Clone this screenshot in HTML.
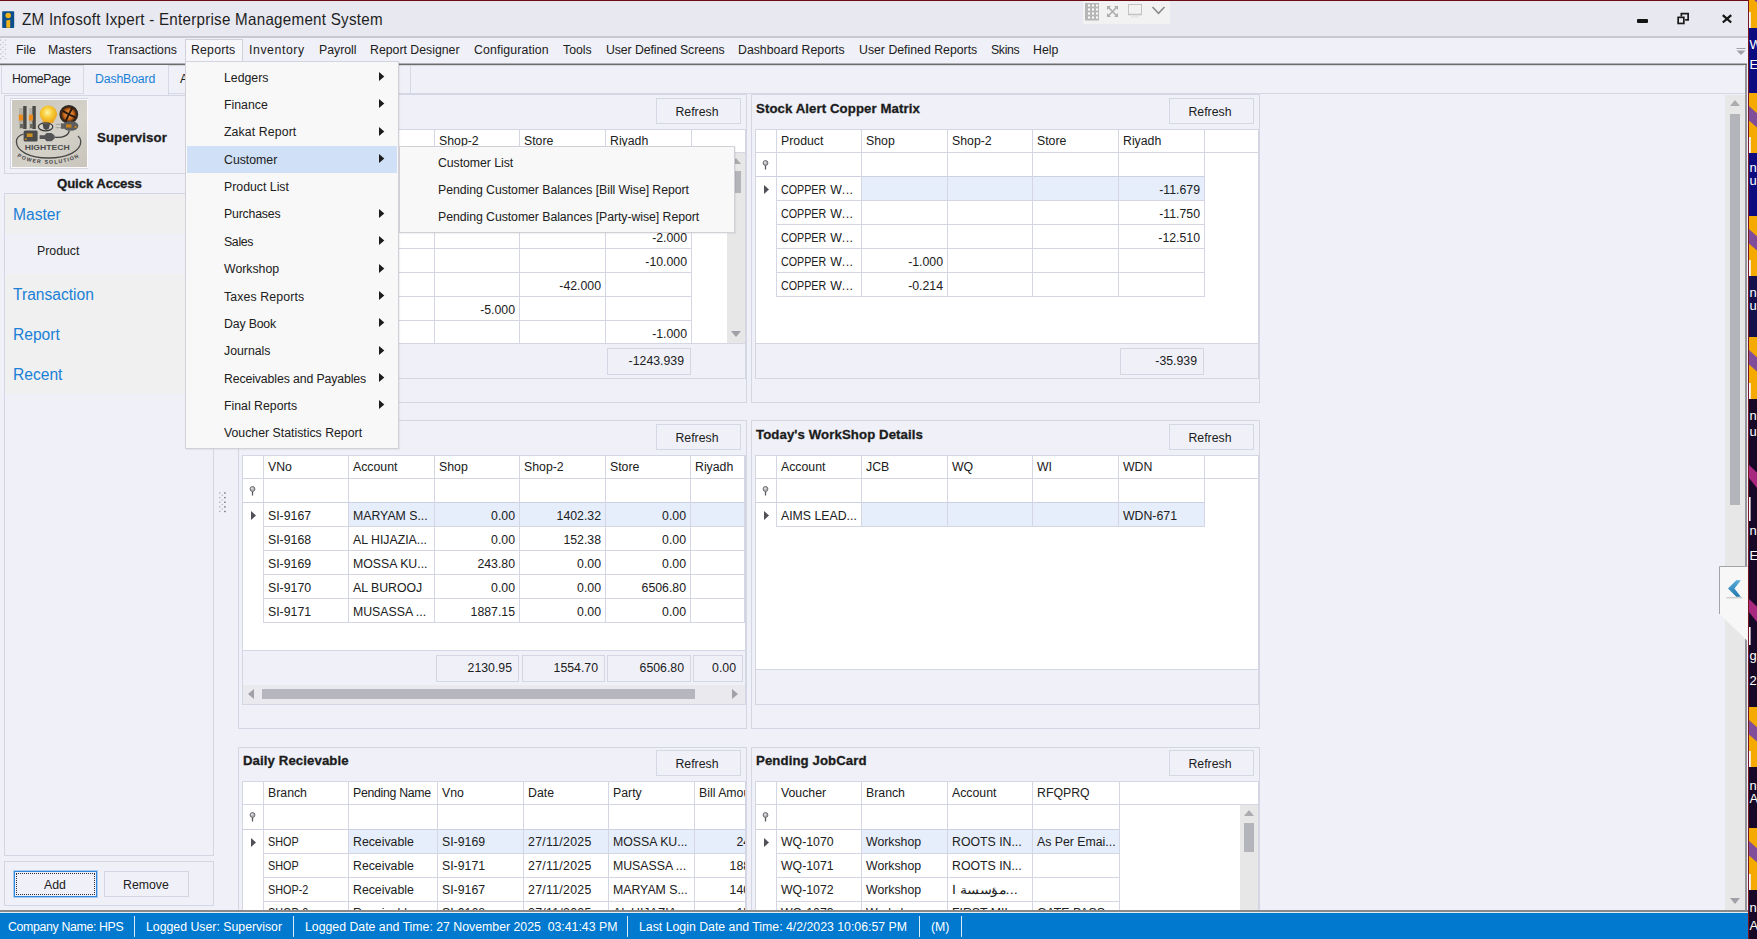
<!DOCTYPE html>
<html><head><meta charset="utf-8"><title>ZM Infosoft Ixpert - Enterprise Management System</title>
<style>
html,body{margin:0;padding:0;}
body{width:1757px;height:939px;overflow:hidden;position:relative;background:#eff0f8;font-family:"Liberation Sans",sans-serif;font-size:12.3px;color:#202020;}
div{position:absolute;box-sizing:border-box;}
svg{position:absolute;overflow:visible;}
.t{white-space:nowrap;line-height:16px;height:16px;}
.b{font-weight:bold;font-size:13.2px;letter-spacing:0.1px;color:#1c1c1c;-webkit-text-stroke:0.3px #1c1c1c;}
.h{font-size:15.6px;color:#1a80d6;line-height:20px;height:20px;white-space:nowrap;}
.c{border-right:1px solid #d4d6e4;border-bottom:1px solid #d4d6e4;background:#fff;white-space:nowrap;overflow:hidden;line-height:24.4px;padding:0 4px 0 4px;}
.u{display:inline-block;transform:scaleX(.88);transform-origin:0 50%;}
.r{text-align:right;}
.s{background:#e6eefc;}
.btn{border:1px solid #d4d7e4;background:#f0f1f8;text-align:center;line-height:26.4px;padding-right:3px;}
.m{white-space:nowrap;line-height:16px;height:16px;color:#202020;}
</style></head><body>

<svg style="left:1749px;top:0px;overflow:hidden" width="8" height="939" viewBox="0 0 8 939"><rect width="8" height="939" fill="#180828"/><rect x="0" y="28" width="8" height="65" fill="#0c0c80"/><rect x="0" y="153" width="8" height="63" fill="#0c0c80"/><rect x="0" y="276" width="8" height="61" fill="#14104c"/><rect x="0" y="-32" width="8" height="60" fill="#f4aa00"/><path d="M0 -19l8 7.200v14.400l-8 -7.200z" fill="#7f4d9a"/><rect x="0" y="12" width="1.800" height="16" fill="#f4f4fa"/><rect x="0" y="93" width="8" height="60" fill="#f4aa00"/><path d="M0 106l8 7.200v14.400l-8 -7.200z" fill="#7f4d9a"/><rect x="0" y="137" width="1.800" height="16" fill="#f4f4fa"/><rect x="0" y="216" width="8" height="60" fill="#f4aa00"/><path d="M0 229l8 7.200v14.400l-8 -7.200z" fill="#7f4d9a"/><rect x="0" y="260" width="1.800" height="16" fill="#f4f4fa"/><rect x="0" y="337" width="8" height="62" fill="#f4aa00"/><path d="M0 350l8 7.200v14.400l-8 -7.200z" fill="#7f4d9a"/><rect x="0" y="383" width="1.800" height="16" fill="#f4f4fa"/><rect x="0" y="707" width="8" height="60" fill="#f4aa00"/><path d="M0 720l8 7.200v14.400l-8 -7.200z" fill="#7f4d9a"/><rect x="0" y="751" width="1.800" height="16" fill="#f4f4fa"/><rect x="0" y="828" width="8" height="62" fill="#f4aa00"/><path d="M0 841l8 7.200v14.400l-8 -7.200z" fill="#7f4d9a"/><rect x="0" y="874" width="1.800" height="16" fill="#f4f4fa"/><path d="M0 465l8 7.500v15.500l-8 -10z" fill="#a82880"/><rect x="0" y="497" width="1.600" height="24" fill="#f4f4fa"/><path d="M0 599l8 7.500v15.500l-8 -10z" fill="#a82880"/><rect x="0" y="627" width="1.600" height="18" fill="#f4f4fa"/><g font-family="Liberation Sans, sans-serif" font-size="13" fill="#ffffff"><text x="0.500" y="49">W</text><text x="0.500" y="69">E</text><text x="0.500" y="172">ng</text><text x="0.500" y="185">u</text><text x="0.500" y="297">ng</text><text x="0.500" y="310">u</text><text x="0.500" y="420">ng</text><text x="0.500" y="436">u</text><text x="0.500" y="535">ng</text><text x="0.500" y="560">E .</text><text x="0.500" y="660">g:</text><text x="0.500" y="685">2</text><text x="0.500" y="790">ng</text><text x="0.500" y="803">A</text><text x="0.500" y="912">ng</text><text x="0.500" y="930">A</text></g></svg>
<div style="left:0px;top:0px;width:1748px;height:37px;background:#e8e8f0;"></div>
<div style="left:0px;top:0px;width:1749px;height:1px;background:#6c0c14;"></div>
<div style="left:1748px;top:0px;width:1px;height:939px;background:#7a1622;"></div>
<div class="t" style="left:22px;top:10.5px;font-size:15.2px;letter-spacing:0.25px;line-height:18px;height:18px;color:#1e1e1e;transform:scaleY(1.1);transform-origin:0 14.5px;">ZM Infosoft Ixpert - Enterprise Management System</div>
<svg style="left:2px;top:10.500px" width="13" height="18" viewBox="0 0 13 18"><rect x="0.200" y="0.300" width="12" height="16.800" rx="0.800" fill="#0a4f8c"/><circle cx="6.200" cy="4.400" r="2.750" fill="#f4b418"/><path d="M4.300 9.600l3.900 -0.800v7.900h-3.900z" fill="#f4b418"/></svg>
<div style="left:1083px;top:1px;width:87px;height:23px;background:#f2f2f2;"></div>
<svg style="left:1085px;top:2.500px" width="14" height="18" viewBox="0 0 14 18"><rect x="0" y="0" width="14" height="17.500" fill="#b6b6b6"/><rect x="3" y="1.5" width="2" height="2" fill="#fff"/><rect x="3" y="5.5" width="2" height="2" fill="#fff"/><rect x="3" y="9.5" width="2" height="2" fill="#fff"/><rect x="3" y="13.5" width="2" height="2" fill="#fff"/><rect x="7" y="1.5" width="2" height="2" fill="#fff"/><rect x="7" y="5.5" width="2" height="2" fill="#fff"/><rect x="7" y="9.5" width="2" height="2" fill="#fff"/><rect x="7" y="13.5" width="2" height="2" fill="#fff"/><rect x="11" y="1.5" width="2" height="2" fill="#fff"/><rect x="11" y="5.5" width="2" height="2" fill="#fff"/><rect x="11" y="9.5" width="2" height="2" fill="#fff"/><rect x="11" y="13.5" width="2" height="2" fill="#fff"/></svg>
<svg style="left:1107px;top:6px" width="11" height="11" viewBox="0 0 11 11" fill="#adadad" stroke="#adadad"><path d="M1.500 1.500l8 8M9.500 1.500l-8 8" stroke-width="1.600" fill="none"/><path d="M0 0h4l-4 4zM11 0h-4l4 4zM0 11h4l-4 -4zM11 11h-4l4 -4z" stroke="none"/></svg>
<svg style="left:1128px;top:4px" width="14" height="14" viewBox="0 0 14 14" fill="none" stroke="#c4c4c4"><rect x="0.500" y="0.500" width="13" height="10" stroke-width="1"/><path d="M0 10.500h14" stroke-width="1.600"/><path d="M3.500 13h7" stroke="#d0d0d0" stroke-width="1.200" stroke-dasharray="1.500 1"/></svg>
<svg style="left:1152px;top:6px" width="13" height="9" viewBox="0 0 13 9" fill="none" stroke="#888888" stroke-width="1.500"><path d="M0.500 1l6 6.300l6 -6.300"/></svg>
<div style="left:1637px;top:19px;width:11px;height:4px;background:#141414;border-radius:1px;"></div>
<svg style="left:1676px;top:11.500px" width="14" height="14" viewBox="0 0 14 14" fill="none" stroke="#1a1a1a" stroke-width="1.700"><path d="M5.350 4.500V1.650h6.800v6.300h-3"/><rect x="2.150" y="5.350" width="5.700" height="6.100"/></svg>
<svg style="left:1721px;top:13px" width="12" height="12" viewBox="0 0 12 12" fill="none" stroke="#161616" stroke-width="2.300"><path d="M1.800 2.200l8.400 7.300M10.200 2.200l-8.400 7.300"/></svg>
<div style="left:0px;top:36px;width:1748px;height:28px;background:#f0f0f8;border-top:2px solid #c8c8d4;"></div>
<div style="left:0px;top:63px;width:1747px;height:3px;background:linear-gradient(#b0b0b4 0,#b0b0b4 33%,#6c6c6c 33%,#6c6c6c 67%,#d4d4da 67%);"></div>
<div style="left:1744px;top:65px;width:3px;height:846px;background:#94949a;border-left:1px solid #f8f8fc;"></div>
<svg style="left:0px;top:36px" width="7" height="26"><g fill="#c6c6ca"><rect x="0" y="3.50" width="1.500" height="1.300"/><rect x="4.900" y="3.50" width="1.300" height="1.300"/><rect x="0" y="8.12" width="1.500" height="1.300"/><rect x="4.900" y="8.12" width="1.300" height="1.300"/><rect x="0" y="12.74" width="1.500" height="1.300"/><rect x="4.900" y="12.74" width="1.300" height="1.300"/><rect x="0" y="17.36" width="1.500" height="1.300"/><rect x="4.900" y="17.36" width="1.300" height="1.300"/><rect x="0" y="21.98" width="1.500" height="1.300"/><rect x="4.900" y="21.98" width="1.300" height="1.300"/><rect x="2.300" y="6.10" width="1.600" height="1.100"/><rect x="2.300" y="10.72" width="1.600" height="1.100"/><rect x="2.300" y="15.34" width="1.600" height="1.100"/><rect x="2.300" y="19.96" width="1.600" height="1.100"/></g></svg>
<div style="left:185px;top:39px;width:58px;height:23px;background:#f6f6fb;border:1px solid #d0d0d8;border-bottom:none;"></div>
<div class="t" style="left:16px;top:42.2px;">File</div>
<div class="t" style="left:48px;top:42.2px;">Masters</div>
<div class="t" style="left:107px;top:42.2px;">Transactions</div>
<div class="t" style="left:191px;top:42.2px;letter-spacing:0.19px;">Reports</div>
<div class="t" style="left:249px;top:42.2px;letter-spacing:0.57px;">Inventory</div>
<div class="t" style="left:319px;top:42.2px;">Payroll</div>
<div class="t" style="left:370px;top:42.2px;">Report Designer</div>
<div class="t" style="left:474px;top:42.2px;letter-spacing:0.12px;">Configuration</div>
<div class="t" style="left:563px;top:42.2px;">Tools</div>
<div class="t" style="left:606px;top:42.2px;letter-spacing:-0.09px;">User Defined Screens</div>
<div class="t" style="left:738px;top:42.2px;">Dashboard Reports</div>
<div class="t" style="left:859px;top:42.2px;">User Defined Reports</div>
<div class="t" style="left:991px;top:42.2px;letter-spacing:-0.34px;">Skins</div>
<div class="t" style="left:1033px;top:42.2px;">Help</div>
<svg style="left:1736px;top:46.500px" width="10" height="9" viewBox="0 0 10 9"><path d="M0.500 1.500h9" stroke="#a0a0a8"/><path d="M0.500 3.500h9l-4.500 4.500z" fill="#a0a0a8"/></svg>
<div style="left:2px;top:66px;width:1743px;height:28px;background:#eff0f8;"></div>
<div style="left:2px;top:93px;width:1743px;height:1px;background:#d6d8e6;"></div>
<div style="left:1px;top:65px;width:83px;height:29px;border-right:1px solid #d6d8e6;border-left:1px solid #d6d8e6;"></div>
<div style="left:84px;top:65px;width:85px;height:30px;border-right:1px solid #d6d8e6;background:#eff0f8;"></div>
<div style="left:169px;top:65px;width:242px;height:29px;border-right:1px solid #d6d8e6;"></div>
<div class="t" style="left:12px;top:70.8px;letter-spacing:-0.4px;">HomePage</div>
<div class="t" style="left:95px;top:70.8px;color:#1a80d6;letter-spacing:-0.15px;">DashBoard</div>
<div class="t" style="left:180px;top:70.8px;">A</div>
<div style="left:4px;top:95px;width:210px;height:79px;border:1px solid #d4d6e4;"></div>
<div style="left:10px;top:98px;width:78px;height:71px;border:1px solid #d4d6e4;background:#f4f4fa;"></div>
<div style="left:11px;top:99px;width:77px;height:69px;border:1px solid #fafaff;"></div>
<svg style="left:12px;top:100px" width="75" height="67" viewBox="0 0 75 67">
<defs><linearGradient id="lg" x1="0" y1="0" x2="1" y2="1"><stop offset="0" stop-color="#c9c6bc"/><stop offset="0.6" stop-color="#d4d1c9"/><stop offset="1" stop-color="#c8c4bc"/></linearGradient>
<radialGradient id="bulb" cx="0.45" cy="0.4" r="0.65"><stop offset="0" stop-color="#fff6a8"/><stop offset="0.45" stop-color="#f8cc38"/><stop offset="1" stop-color="#e89c18"/></radialGradient>
<radialGradient id="fan" cx="0.5" cy="0.5" r="0.5"><stop offset="0" stop-color="#f0b060"/><stop offset="0.55" stop-color="#c86414"/><stop offset="0.8" stop-color="#3a2414"/><stop offset="1" stop-color="#2a2a2a"/></radialGradient></defs>
<rect width="75" height="67" fill="url(#lg)"/>
<rect x="7" y="8" width="5" height="21" fill="#b4b2a8"/><rect x="11.200" y="6" width="3.400" height="23" fill="#4a4a46"/><rect x="6.800" y="14.600" width="4.200" height="6" fill="#ec8a1c"/><rect x="8" y="24" width="3" height="4" fill="#6a6a62"/>
<rect x="17" y="8" width="5" height="21" fill="#b4b2a8"/><rect x="20.400" y="6" width="3.400" height="23" fill="#4a4a46"/><rect x="16.800" y="14.600" width="4.200" height="6" fill="#ec8a1c"/><rect x="18" y="24" width="3" height="4" fill="#6a6a62"/>
<path d="M36.400 5.500c5 0 8.600 3.800 8.600 8.400c0 3.600 -2.600 5.400 -3.800 9h-9.600c-1.200 -3.600 -3.800 -5.400 -3.800 -9c0 -4.600 3.600 -8.400 8.600 -8.400z" fill="url(#bulb)"/>
<ellipse cx="33.600" cy="26.800" rx="7.200" ry="4" fill="#d8d6d0" stroke="#3c3c3c" stroke-width="1.300"/><path d="M30.500 23.500h7.500l-1 5l-2.800 1.800l-2.700 -1.800z" fill="#4c4c4c"/>
<circle cx="56.800" cy="14.400" r="9.400" fill="url(#fan)"/><path d="M56.800 14.400l-6 -3.500M56.800 14.400l3.500 -6.500M56.800 14.400l6.500 3M56.800 14.400l-3 6.500" stroke="#2a1a10" stroke-width="2"/>
<ellipse cx="58.600" cy="26" rx="7.800" ry="4.800" fill="#5a5c5e"/><rect x="54" y="24.400" width="5.500" height="3.200" fill="#c8801c"/><rect x="62.500" y="26" width="2" height="2" fill="#c8801c"/>
<path d="M43.600 24.400h8M43.600 27.600h8" stroke="#a8a8a4" stroke-width="1.300"/><rect x="49" y="23.400" width="3" height="5.400" fill="#606060"/>
<rect x="11.600" y="30.400" width="14" height="11.200" rx="1.500" fill="#4a4a4a"/><rect x="14.800" y="33.400" width="5.800" height="3.600" fill="#c8901c"/><rect x="12.800" y="38.500" width="2" height="1.500" fill="#c8801c"/>
<path d="M27.600 35.200h5l2 -2.200h5l3 2.600v3l-3 2.600h-5l-2 -2.200h-5z" fill="#525456"/>
<path d="M42.600 37.200c8 1 14 -1.500 14.600 -6.500" fill="none" stroke="#404040" stroke-width="1.300"/>
<path d="M11.600 34c-5 1.500 -7.200 4 -7.200 7.500c0 9.500 13 16.500 32 16.500s32.400 -7 32.400 -16.500c0 -2 -1 -4 -2.800 -5.500" fill="none" stroke="#484848" stroke-width="1.300"/>
<text x="12.800" y="49.600" textLength="44.800" lengthAdjust="spacingAndGlyphs" font-family="Liberation Sans, sans-serif" font-weight="bold" font-size="6.800" fill="#4c4c4c">HIGHTECH</text>
<path id="arc" d="M4.500 56c8 5.500 20 7.800 32 7.800s24 -2.300 32 -7.800" fill="none"/>
<text font-family="Liberation Sans, sans-serif" font-weight="bold" font-size="5.300" fill="#404040" letter-spacing="1.150"><textPath href="#arc" startOffset="50%" text-anchor="middle">POWER SOLUTION</textPath></text>
</svg>
<div class="t b" style="left:97px;top:129.6px;">Supervisor</div>
<div class="t b" style="left:57px;top:175.8px;letter-spacing:-0.1px;">Quick Access</div>
<div style="left:4px;top:193px;width:210px;height:663px;border:1px solid #d4d6e4;"></div>
<div style="left:5px;top:194px;width:208px;height:40px;background:#f0f0f0;"></div>
<div style="left:5px;top:274px;width:208px;height:120px;background:#f0f0f0;"></div>
<div class="h" style="left:13px;top:204.8px;">Master</div>
<div class="t" style="left:37px;top:243px;">Product</div>
<div class="h" style="left:13px;top:284.6px;">Transaction</div>
<div class="h" style="left:13px;top:324.6px;">Report</div>
<div class="h" style="left:13px;top:364.6px;">Recent</div>
<div style="left:4px;top:861px;width:210px;height:45px;border:1px solid #d4d6e4;"></div>
<div style="left:14px;top:871px;width:83px;height:26px;border:1px solid #2f86da;background:#f0f1f8;box-shadow:0 0 0 1px rgba(47,134,218,.35);"></div>
<div style="left:16px;top:873px;width:79px;height:22px;border:1px dotted #303030;"></div>
<div style="left:104px;top:871px;width:85px;height:26px;border:1px solid #d4d6e4;background:#f0f1f8;"></div>
<div class="t" style="left:44px;top:876.6px;">Add</div>
<div class="t" style="left:123px;top:876.6px;">Remove</div>
<svg style="left:218.700px;top:492px" width="7" height="21"><rect x="0" y="0.30" width="1.500" height="1.300" fill="#b4b4b6"/><rect x="5.200" y="0.30" width="1.400" height="1.400" fill="#6c6c6e"/><rect x="0" y="4.92" width="1.500" height="1.300" fill="#b4b4b6"/><rect x="5.200" y="4.92" width="1.400" height="1.400" fill="#6c6c6e"/><rect x="0" y="9.54" width="1.500" height="1.300" fill="#b4b4b6"/><rect x="5.200" y="9.54" width="1.400" height="1.400" fill="#6c6c6e"/><rect x="0" y="14.16" width="1.500" height="1.300" fill="#b4b4b6"/><rect x="5.200" y="14.16" width="1.400" height="1.400" fill="#6c6c6e"/><rect x="0" y="18.78" width="1.500" height="1.300" fill="#b4b4b6"/><rect x="5.200" y="18.78" width="1.400" height="1.400" fill="#6c6c6e"/><rect x="2.500" y="2.70" width="1.600" height="1.100" fill="#c0c0c2"/><rect x="2.500" y="7.32" width="1.600" height="1.100" fill="#c0c0c2"/><rect x="2.500" y="11.94" width="1.600" height="1.100" fill="#c0c0c2"/><rect x="2.500" y="16.56" width="1.600" height="1.100" fill="#c0c0c2"/></svg>
<div style="left:238px;top:94px;width:509px;height:309px;border:1px solid #d4d6e4;"></div>
<div class="t b" style="left:243px;top:100.8px;">Stock Alert</div>
<div class="btn" style="left:656px;top:98px;width:85px;height:26px;">Refresh</div>
<div style="left:242px;top:129px;width:504px;height:250px;background:#fff;border:1px solid #d4d6e4;overflow:hidden;">
<div class="c" style="left:0px;top:0px;width:21px;height:23px;line-height:23.4px;"></div>
<div class="c" style="left:21px;top:0px;width:85px;height:23px;line-height:23.4px;">Product</div>
<div class="c" style="left:106px;top:0px;width:86px;height:23px;line-height:23.4px;">Shop</div>
<div class="c" style="left:192px;top:0px;width:85px;height:23px;line-height:23.4px;">Shop-2</div>
<div class="c" style="left:277px;top:0px;width:86px;height:23px;line-height:23.4px;">Store</div>
<div class="c" style="left:363px;top:0px;width:86px;height:23px;line-height:23.4px;">Riyadh</div>
<div style="left:449px;top:0px;width:54px;height:23px;border-bottom:1px solid #d4d6e4;"></div>
<div class="c" style="left:0px;top:23px;width:21px;height:25px;border-bottom:2px solid #ccd0e0;"></div>
<div class="c" style="left:21px;top:23px;width:85px;height:25px;border-bottom:2px solid #ccd0e0;"></div>
<div class="c" style="left:106px;top:23px;width:86px;height:25px;border-bottom:2px solid #ccd0e0;"></div>
<div class="c" style="left:192px;top:23px;width:85px;height:25px;border-bottom:2px solid #ccd0e0;"></div>
<div class="c" style="left:277px;top:23px;width:86px;height:25px;border-bottom:2px solid #ccd0e0;"></div>
<div class="c" style="left:363px;top:23px;width:86px;height:25px;border-bottom:2px solid #ccd0e0;"></div>
<div class="c" style="left:0px;top:47px;width:21px;height:24px;border-bottom:none;line-height:27.2px;"></div>
<div class="c" style="left:21px;top:47px;width:85px;height:24px;line-height:27.2px;"></div>
<div class="c r s" style="left:106px;top:47px;width:86px;height:24px;line-height:27.2px;"></div>
<div class="c r s" style="left:192px;top:47px;width:85px;height:24px;line-height:27.2px;"></div>
<div class="c r s" style="left:277px;top:47px;width:86px;height:24px;line-height:27.2px;"></div>
<div class="c r s" style="left:363px;top:47px;width:86px;height:24px;line-height:27.2px;">-11.000</div>
<div class="c" style="left:0px;top:71px;width:21px;height:24px;border-bottom:none;line-height:27.2px;"></div>
<div class="c" style="left:21px;top:71px;width:85px;height:24px;line-height:27.2px;"></div>
<div class="c r" style="left:106px;top:71px;width:86px;height:24px;line-height:27.2px;"></div>
<div class="c r" style="left:192px;top:71px;width:85px;height:24px;line-height:27.2px;"></div>
<div class="c r" style="left:277px;top:71px;width:86px;height:24px;line-height:27.2px;"></div>
<div class="c r" style="left:363px;top:71px;width:86px;height:24px;line-height:27.2px;">-3.000</div>
<div class="c" style="left:0px;top:95px;width:21px;height:24px;border-bottom:none;line-height:27.2px;"></div>
<div class="c" style="left:21px;top:95px;width:85px;height:24px;line-height:27.2px;"></div>
<div class="c r" style="left:106px;top:95px;width:86px;height:24px;line-height:27.2px;"></div>
<div class="c r" style="left:192px;top:95px;width:85px;height:24px;line-height:27.2px;"></div>
<div class="c r" style="left:277px;top:95px;width:86px;height:24px;line-height:27.2px;"></div>
<div class="c r" style="left:363px;top:95px;width:86px;height:24px;line-height:27.2px;">-2.000</div>
<div class="c" style="left:0px;top:119px;width:21px;height:24px;border-bottom:none;line-height:27.2px;"></div>
<div class="c" style="left:21px;top:119px;width:85px;height:24px;line-height:27.2px;"></div>
<div class="c r" style="left:106px;top:119px;width:86px;height:24px;line-height:27.2px;"></div>
<div class="c r" style="left:192px;top:119px;width:85px;height:24px;line-height:27.2px;"></div>
<div class="c r" style="left:277px;top:119px;width:86px;height:24px;line-height:27.2px;"></div>
<div class="c r" style="left:363px;top:119px;width:86px;height:24px;line-height:27.2px;">-10.000</div>
<div class="c" style="left:0px;top:143px;width:21px;height:24px;border-bottom:none;line-height:27.2px;"></div>
<div class="c" style="left:21px;top:143px;width:85px;height:24px;line-height:27.2px;"></div>
<div class="c r" style="left:106px;top:143px;width:86px;height:24px;line-height:27.2px;"></div>
<div class="c r" style="left:192px;top:143px;width:85px;height:24px;line-height:27.2px;"></div>
<div class="c r" style="left:277px;top:143px;width:86px;height:24px;line-height:27.2px;">-42.000</div>
<div class="c r" style="left:363px;top:143px;width:86px;height:24px;line-height:27.2px;"></div>
<div class="c" style="left:0px;top:167px;width:21px;height:24px;border-bottom:none;line-height:27.2px;"></div>
<div class="c" style="left:21px;top:167px;width:85px;height:24px;line-height:27.2px;"></div>
<div class="c r" style="left:106px;top:167px;width:86px;height:24px;line-height:27.2px;"></div>
<div class="c r" style="left:192px;top:167px;width:85px;height:24px;line-height:27.2px;">-5.000</div>
<div class="c r" style="left:277px;top:167px;width:86px;height:24px;line-height:27.2px;"></div>
<div class="c r" style="left:363px;top:167px;width:86px;height:24px;line-height:27.2px;"></div>
<div class="c" style="left:0px;top:191px;width:21px;height:24px;border-bottom:none;line-height:27.2px;"></div>
<div class="c" style="left:21px;top:191px;width:85px;height:24px;line-height:27.2px;"></div>
<div class="c r" style="left:106px;top:191px;width:86px;height:24px;line-height:27.2px;"></div>
<div class="c r" style="left:192px;top:191px;width:85px;height:24px;line-height:27.2px;"></div>
<div class="c r" style="left:277px;top:191px;width:86px;height:24px;line-height:27.2px;"></div>
<div class="c r" style="left:363px;top:191px;width:86px;height:24px;line-height:27.2px;">-1.000</div>
</div>
<svg style="left:249px;top:160px" width="7" height="10" viewBox="0 0 7 10"><circle cx="3.500" cy="3" r="2.400" fill="#b8b8bc" stroke="#68686c" stroke-width="1"/><circle cx="3" cy="2.400" r="0.900" fill="#e8e8ec"/><path d="M3.500 5.500v4" stroke="#58585c" stroke-width="1.300"/></svg>
<svg style="left:251px;top:185px" width="5" height="9" viewBox="0 0 5 9"><path d="M0 0l5 4.500l-5 4.500z" fill="#505058"/></svg>
<div style="left:242px;top:343px;width:504px;height:36px;background:#eff0f8;border:1px solid #d4d6e4;"></div>
<div style="left:607px;top:348px;width:84px;height:27px;border:1px solid #d4d6e4;background:#f0f1f8;text-align:right;padding-right:6px;line-height:25.6px;">-1243.939</div>
<div style="left:727px;top:153px;width:18px;height:190px;background:#e7e7e8;"></div>
<div style="left:731px;top:171px;width:10px;height:22px;background:#b4b4bb;"></div>
<svg style="left:731px;top:158px" width="10" height="6" viewBox="0 0 10 6"><path d="M0 6l5 -6l5 6z" fill="#acacb0"/></svg>
<svg style="left:731px;top:331px" width="10" height="6" viewBox="0 0 10 6"><path d="M0 0l5 6l5 -6z" fill="#a0a0a8"/></svg>
<div style="left:751px;top:94px;width:509px;height:309px;border:1px solid #d4d6e4;"></div>
<div class="t b" style="left:756px;top:100.8px;">Stock Alert Copper Matrix</div>
<div class="btn" style="left:1169px;top:98px;width:85px;height:26px;">Refresh</div>
<div style="left:755px;top:129px;width:504px;height:250px;background:#fff;border:1px solid #d4d6e4;overflow:hidden;">
<div class="c" style="left:0px;top:0px;width:21px;height:23px;line-height:23.4px;"></div>
<div class="c" style="left:21px;top:0px;width:85px;height:23px;line-height:23.4px;">Product</div>
<div class="c" style="left:106px;top:0px;width:86px;height:23px;line-height:23.4px;">Shop</div>
<div class="c" style="left:192px;top:0px;width:85px;height:23px;line-height:23.4px;">Shop-2</div>
<div class="c" style="left:277px;top:0px;width:86px;height:23px;line-height:23.4px;">Store</div>
<div class="c" style="left:363px;top:0px;width:86px;height:23px;line-height:23.4px;">Riyadh</div>
<div style="left:449px;top:0px;width:54px;height:23px;border-bottom:1px solid #d4d6e4;"></div>
<div class="c" style="left:0px;top:23px;width:21px;height:25px;border-bottom:2px solid #ccd0e0;"></div>
<div class="c" style="left:21px;top:23px;width:85px;height:25px;border-bottom:2px solid #ccd0e0;"></div>
<div class="c" style="left:106px;top:23px;width:86px;height:25px;border-bottom:2px solid #ccd0e0;"></div>
<div class="c" style="left:192px;top:23px;width:85px;height:25px;border-bottom:2px solid #ccd0e0;"></div>
<div class="c" style="left:277px;top:23px;width:86px;height:25px;border-bottom:2px solid #ccd0e0;"></div>
<div class="c" style="left:363px;top:23px;width:86px;height:25px;border-bottom:2px solid #ccd0e0;"></div>
<div class="c" style="left:0px;top:47px;width:21px;height:24px;border-bottom:none;line-height:27.2px;"></div>
<div class="c" style="left:21px;top:47px;width:85px;height:24px;line-height:27.2px;"><span class="u" style="transform:scaleX(.87)">COPPER</span><span style="margin-left:-6.500px;letter-spacing:0.5px"> W...</span></div>
<div class="c r s" style="left:106px;top:47px;width:86px;height:24px;line-height:27.2px;"></div>
<div class="c r s" style="left:192px;top:47px;width:85px;height:24px;line-height:27.2px;"></div>
<div class="c r s" style="left:277px;top:47px;width:86px;height:24px;line-height:27.2px;"></div>
<div class="c r s" style="left:363px;top:47px;width:86px;height:24px;line-height:27.2px;">-11.679</div>
<div class="c" style="left:0px;top:71px;width:21px;height:24px;border-bottom:none;line-height:27.2px;"></div>
<div class="c" style="left:21px;top:71px;width:85px;height:24px;line-height:27.2px;"><span class="u" style="transform:scaleX(.87)">COPPER</span><span style="margin-left:-6.500px;letter-spacing:0.5px"> W...</span></div>
<div class="c r" style="left:106px;top:71px;width:86px;height:24px;line-height:27.2px;"></div>
<div class="c r" style="left:192px;top:71px;width:85px;height:24px;line-height:27.2px;"></div>
<div class="c r" style="left:277px;top:71px;width:86px;height:24px;line-height:27.2px;"></div>
<div class="c r" style="left:363px;top:71px;width:86px;height:24px;line-height:27.2px;">-11.750</div>
<div class="c" style="left:0px;top:95px;width:21px;height:24px;border-bottom:none;line-height:27.2px;"></div>
<div class="c" style="left:21px;top:95px;width:85px;height:24px;line-height:27.2px;"><span class="u" style="transform:scaleX(.87)">COPPER</span><span style="margin-left:-6.500px;letter-spacing:0.5px"> W...</span></div>
<div class="c r" style="left:106px;top:95px;width:86px;height:24px;line-height:27.2px;"></div>
<div class="c r" style="left:192px;top:95px;width:85px;height:24px;line-height:27.2px;"></div>
<div class="c r" style="left:277px;top:95px;width:86px;height:24px;line-height:27.2px;"></div>
<div class="c r" style="left:363px;top:95px;width:86px;height:24px;line-height:27.2px;">-12.510</div>
<div class="c" style="left:0px;top:119px;width:21px;height:24px;border-bottom:none;line-height:27.2px;"></div>
<div class="c" style="left:21px;top:119px;width:85px;height:24px;line-height:27.2px;"><span class="u" style="transform:scaleX(.87)">COPPER</span><span style="margin-left:-6.500px;letter-spacing:0.5px"> W...</span></div>
<div class="c r" style="left:106px;top:119px;width:86px;height:24px;line-height:27.2px;">-1.000</div>
<div class="c r" style="left:192px;top:119px;width:85px;height:24px;line-height:27.2px;"></div>
<div class="c r" style="left:277px;top:119px;width:86px;height:24px;line-height:27.2px;"></div>
<div class="c r" style="left:363px;top:119px;width:86px;height:24px;line-height:27.2px;"></div>
<div class="c" style="left:0px;top:143px;width:21px;height:24px;border-bottom:none;line-height:27.2px;"></div>
<div class="c" style="left:21px;top:143px;width:85px;height:24px;line-height:27.2px;"><span class="u" style="transform:scaleX(.87)">COPPER</span><span style="margin-left:-6.500px;letter-spacing:0.5px"> W...</span></div>
<div class="c r" style="left:106px;top:143px;width:86px;height:24px;line-height:27.2px;">-0.214</div>
<div class="c r" style="left:192px;top:143px;width:85px;height:24px;line-height:27.2px;"></div>
<div class="c r" style="left:277px;top:143px;width:86px;height:24px;line-height:27.2px;"></div>
<div class="c r" style="left:363px;top:143px;width:86px;height:24px;line-height:27.2px;"></div>
</div>
<svg style="left:762px;top:160px" width="7" height="10" viewBox="0 0 7 10"><circle cx="3.500" cy="3" r="2.400" fill="#b8b8bc" stroke="#68686c" stroke-width="1"/><circle cx="3" cy="2.400" r="0.900" fill="#e8e8ec"/><path d="M3.500 5.500v4" stroke="#58585c" stroke-width="1.300"/></svg>
<svg style="left:764px;top:185px" width="5" height="9" viewBox="0 0 5 9"><path d="M0 0l5 4.500l-5 4.500z" fill="#505058"/></svg>
<div style="left:755px;top:343px;width:504px;height:36px;background:#eff0f8;border:1px solid #d4d6e4;"></div>
<div style="left:1120px;top:348px;width:84px;height:27px;border:1px solid #d4d6e4;background:#f0f1f8;text-align:right;padding-right:6px;line-height:25.6px;">-35.939</div>
<div style="left:238px;top:420px;width:509px;height:309px;border:1px solid #d4d6e4;"></div>
<div class="t b" style="left:243px;top:426.8px;">Today&#x27;s Sales</div>
<div class="btn" style="left:656px;top:424px;width:85px;height:26px;">Refresh</div>
<div style="left:242px;top:455px;width:504px;height:250px;background:#fff;border:1px solid #d4d6e4;overflow:hidden;">
<div class="c" style="left:0px;top:0px;width:21px;height:23px;line-height:23.4px;"></div>
<div class="c" style="left:21px;top:0px;width:85px;height:23px;line-height:23.4px;">VNo</div>
<div class="c" style="left:106px;top:0px;width:86px;height:23px;line-height:23.4px;">Account</div>
<div class="c" style="left:192px;top:0px;width:85px;height:23px;line-height:23.4px;">Shop</div>
<div class="c" style="left:277px;top:0px;width:86px;height:23px;line-height:23.4px;">Shop-2</div>
<div class="c" style="left:363px;top:0px;width:85px;height:23px;line-height:23.4px;">Store</div>
<div class="c" style="left:448px;top:0px;width:54px;height:23px;line-height:23.4px;">Riyadh</div>
<div style="left:502px;top:0px;width:1px;height:23px;border-bottom:1px solid #d4d6e4;"></div>
<div class="c" style="left:0px;top:23px;width:21px;height:25px;border-bottom:2px solid #ccd0e0;"></div>
<div class="c" style="left:21px;top:23px;width:85px;height:25px;border-bottom:2px solid #ccd0e0;"></div>
<div class="c" style="left:106px;top:23px;width:86px;height:25px;border-bottom:2px solid #ccd0e0;"></div>
<div class="c" style="left:192px;top:23px;width:85px;height:25px;border-bottom:2px solid #ccd0e0;"></div>
<div class="c" style="left:277px;top:23px;width:86px;height:25px;border-bottom:2px solid #ccd0e0;"></div>
<div class="c" style="left:363px;top:23px;width:85px;height:25px;border-bottom:2px solid #ccd0e0;"></div>
<div class="c" style="left:448px;top:23px;width:54px;height:25px;border-bottom:2px solid #ccd0e0;"></div>
<div class="c" style="left:0px;top:47px;width:21px;height:24px;border-bottom:none;line-height:27.2px;"></div>
<div class="c" style="left:21px;top:47px;width:85px;height:24px;line-height:27.2px;">SI-9167</div>
<div class="c s" style="left:106px;top:47px;width:86px;height:24px;line-height:27.2px;">MARYAM S...</div>
<div class="c r s" style="left:192px;top:47px;width:85px;height:24px;line-height:27.2px;">0.00</div>
<div class="c r s" style="left:277px;top:47px;width:86px;height:24px;line-height:27.2px;">1402.32</div>
<div class="c r s" style="left:363px;top:47px;width:85px;height:24px;line-height:27.2px;">0.00</div>
<div class="c r s" style="left:448px;top:47px;width:54px;height:24px;line-height:27.2px;"></div>
<div class="c" style="left:0px;top:71px;width:21px;height:24px;border-bottom:none;line-height:27.2px;"></div>
<div class="c" style="left:21px;top:71px;width:85px;height:24px;line-height:27.2px;">SI-9168</div>
<div class="c" style="left:106px;top:71px;width:86px;height:24px;line-height:27.2px;">AL HIJAZIA...</div>
<div class="c r" style="left:192px;top:71px;width:85px;height:24px;line-height:27.2px;">0.00</div>
<div class="c r" style="left:277px;top:71px;width:86px;height:24px;line-height:27.2px;">152.38</div>
<div class="c r" style="left:363px;top:71px;width:85px;height:24px;line-height:27.2px;">0.00</div>
<div class="c r" style="left:448px;top:71px;width:54px;height:24px;line-height:27.2px;"></div>
<div class="c" style="left:0px;top:95px;width:21px;height:24px;border-bottom:none;line-height:27.2px;"></div>
<div class="c" style="left:21px;top:95px;width:85px;height:24px;line-height:27.2px;">SI-9169</div>
<div class="c" style="left:106px;top:95px;width:86px;height:24px;line-height:27.2px;">MOSSA KU...</div>
<div class="c r" style="left:192px;top:95px;width:85px;height:24px;line-height:27.2px;">243.80</div>
<div class="c r" style="left:277px;top:95px;width:86px;height:24px;line-height:27.2px;">0.00</div>
<div class="c r" style="left:363px;top:95px;width:85px;height:24px;line-height:27.2px;">0.00</div>
<div class="c r" style="left:448px;top:95px;width:54px;height:24px;line-height:27.2px;"></div>
<div class="c" style="left:0px;top:119px;width:21px;height:24px;border-bottom:none;line-height:27.2px;"></div>
<div class="c" style="left:21px;top:119px;width:85px;height:24px;line-height:27.2px;">SI-9170</div>
<div class="c" style="left:106px;top:119px;width:86px;height:24px;line-height:27.2px;">AL BUROOJ</div>
<div class="c r" style="left:192px;top:119px;width:85px;height:24px;line-height:27.2px;">0.00</div>
<div class="c r" style="left:277px;top:119px;width:86px;height:24px;line-height:27.2px;">0.00</div>
<div class="c r" style="left:363px;top:119px;width:85px;height:24px;line-height:27.2px;">6506.80</div>
<div class="c r" style="left:448px;top:119px;width:54px;height:24px;line-height:27.2px;"></div>
<div class="c" style="left:0px;top:143px;width:21px;height:24px;border-bottom:none;line-height:27.2px;"></div>
<div class="c" style="left:21px;top:143px;width:85px;height:24px;line-height:27.2px;">SI-9171</div>
<div class="c" style="left:106px;top:143px;width:86px;height:24px;line-height:27.2px;">MUSASSA ...</div>
<div class="c r" style="left:192px;top:143px;width:85px;height:24px;line-height:27.2px;">1887.15</div>
<div class="c r" style="left:277px;top:143px;width:86px;height:24px;line-height:27.2px;">0.00</div>
<div class="c r" style="left:363px;top:143px;width:85px;height:24px;line-height:27.2px;">0.00</div>
<div class="c r" style="left:448px;top:143px;width:54px;height:24px;line-height:27.2px;"></div>
</div>
<svg style="left:249px;top:486px" width="7" height="10" viewBox="0 0 7 10"><circle cx="3.500" cy="3" r="2.400" fill="#b8b8bc" stroke="#68686c" stroke-width="1"/><circle cx="3" cy="2.400" r="0.900" fill="#e8e8ec"/><path d="M3.500 5.500v4" stroke="#58585c" stroke-width="1.300"/></svg>
<svg style="left:251px;top:511px" width="5" height="9" viewBox="0 0 5 9"><path d="M0 0l5 4.500l-5 4.500z" fill="#505058"/></svg>
<div style="left:242px;top:650px;width:504px;height:36px;background:#eff0f8;border:1px solid #d4d6e4;"></div>
<div style="left:436px;top:655px;width:83px;height:27px;border:1px solid #d4d6e4;background:#f0f1f8;text-align:right;padding-right:6px;line-height:25.6px;">2130.95</div>
<div style="left:522px;top:655px;width:83px;height:27px;border:1px solid #d4d6e4;background:#f0f1f8;text-align:right;padding-right:6px;line-height:25.6px;">1554.70</div>
<div style="left:607px;top:655px;width:84px;height:27px;border:1px solid #d4d6e4;background:#f0f1f8;text-align:right;padding-right:6px;line-height:25.6px;">6506.80</div>
<div style="left:693px;top:655px;width:50px;height:27px;border:1px solid #d4d6e4;background:#f0f1f8;text-align:right;padding-right:6px;line-height:25.6px;">0.00</div>
<div style="left:243px;top:685px;width:502px;height:19px;background:#e9e9ee;"></div>
<div style="left:262px;top:689px;width:433px;height:10px;background:#b6b6be;"></div>
<svg style="left:248px;top:689px" width="6" height="10" viewBox="0 0 6 10"><path d="M6 0l-6 5l6 5z" fill="#a0a0a8"/></svg>
<svg style="left:732px;top:689px" width="6" height="10" viewBox="0 0 6 10"><path d="M0 0l6 5l-6 5z" fill="#a0a0a8"/></svg>
<div style="left:751px;top:420px;width:509px;height:309px;border:1px solid #d4d6e4;"></div>
<div class="t b" style="left:756px;top:426.8px;">Today&#x27;s WorkShop Details</div>
<div class="btn" style="left:1169px;top:424px;width:85px;height:26px;">Refresh</div>
<div style="left:755px;top:455px;width:504px;height:250px;background:#fff;border:1px solid #d4d6e4;overflow:hidden;">
<div class="c" style="left:0px;top:0px;width:21px;height:23px;line-height:23.4px;"></div>
<div class="c" style="left:21px;top:0px;width:85px;height:23px;line-height:23.4px;">Account</div>
<div class="c" style="left:106px;top:0px;width:86px;height:23px;line-height:23.4px;">JCB</div>
<div class="c" style="left:192px;top:0px;width:85px;height:23px;line-height:23.4px;">WQ</div>
<div class="c" style="left:277px;top:0px;width:86px;height:23px;line-height:23.4px;">WI</div>
<div class="c" style="left:363px;top:0px;width:86px;height:23px;line-height:23.4px;">WDN</div>
<div style="left:449px;top:0px;width:54px;height:23px;border-bottom:1px solid #d4d6e4;"></div>
<div class="c" style="left:0px;top:23px;width:21px;height:25px;border-bottom:2px solid #ccd0e0;"></div>
<div class="c" style="left:21px;top:23px;width:85px;height:25px;border-bottom:2px solid #ccd0e0;"></div>
<div class="c" style="left:106px;top:23px;width:86px;height:25px;border-bottom:2px solid #ccd0e0;"></div>
<div class="c" style="left:192px;top:23px;width:85px;height:25px;border-bottom:2px solid #ccd0e0;"></div>
<div class="c" style="left:277px;top:23px;width:86px;height:25px;border-bottom:2px solid #ccd0e0;"></div>
<div class="c" style="left:363px;top:23px;width:86px;height:25px;border-bottom:2px solid #ccd0e0;"></div>
<div class="c" style="left:0px;top:47px;width:21px;height:24px;border-bottom:none;line-height:27.2px;"></div>
<div class="c" style="left:21px;top:47px;width:85px;height:24px;line-height:27.2px;">AIMS LEAD...</div>
<div class="c s" style="left:106px;top:47px;width:86px;height:24px;line-height:27.2px;"></div>
<div class="c s" style="left:192px;top:47px;width:85px;height:24px;line-height:27.2px;"></div>
<div class="c s" style="left:277px;top:47px;width:86px;height:24px;line-height:27.2px;"></div>
<div class="c s" style="left:363px;top:47px;width:86px;height:24px;line-height:27.2px;">WDN-671</div>
</div>
<svg style="left:762px;top:486px" width="7" height="10" viewBox="0 0 7 10"><circle cx="3.500" cy="3" r="2.400" fill="#b8b8bc" stroke="#68686c" stroke-width="1"/><circle cx="3" cy="2.400" r="0.900" fill="#e8e8ec"/><path d="M3.500 5.500v4" stroke="#58585c" stroke-width="1.300"/></svg>
<svg style="left:764px;top:511px" width="5" height="9" viewBox="0 0 5 9"><path d="M0 0l5 4.500l-5 4.500z" fill="#505058"/></svg>
<div style="left:755px;top:669px;width:504px;height:36px;background:#eff0f8;border:1px solid #d4d6e4;"></div>
<div style="left:238px;top:747px;width:509px;height:165px;border:1px solid #d4d6e4;border-bottom:none;"></div>
<div class="t b" style="left:243px;top:752.8px;">Daily Recievable</div>
<div class="btn" style="left:656px;top:750px;width:85px;height:26px;">Refresh</div>
<div style="left:242px;top:781px;width:504px;height:131px;background:#fff;border:1px solid #d4d6e4;overflow:hidden;border-bottom:none;">
<div class="c" style="left:0px;top:0px;width:21px;height:23px;line-height:23.4px;"></div>
<div class="c" style="left:21px;top:0px;width:85px;height:23px;line-height:23.4px;">Branch</div>
<div class="c" style="left:106px;top:0px;width:89px;height:23px;line-height:23.4px;letter-spacing:-0.3px;">Pending Name</div>
<div class="c" style="left:195px;top:0px;width:86px;height:23px;line-height:23.4px;">Vno</div>
<div class="c" style="left:281px;top:0px;width:85px;height:23px;line-height:23.4px;">Date</div>
<div class="c" style="left:366px;top:0px;width:86px;height:23px;line-height:23.4px;">Party</div>
<div class="c" style="left:452px;top:0px;width:84px;height:23px;line-height:23.4px;">Bill Amount</div>
<div class="c" style="left:0px;top:23px;width:21px;height:26px;border-bottom:2px solid #ccd0e0;"></div>
<div class="c" style="left:21px;top:23px;width:85px;height:26px;border-bottom:2px solid #ccd0e0;"></div>
<div class="c" style="left:106px;top:23px;width:89px;height:26px;border-bottom:2px solid #ccd0e0;"></div>
<div class="c" style="left:195px;top:23px;width:86px;height:26px;border-bottom:2px solid #ccd0e0;"></div>
<div class="c" style="left:281px;top:23px;width:85px;height:26px;border-bottom:2px solid #ccd0e0;"></div>
<div class="c" style="left:366px;top:23px;width:86px;height:26px;border-bottom:2px solid #ccd0e0;"></div>
<div class="c" style="left:452px;top:23px;width:84px;height:26px;border-bottom:2px solid #ccd0e0;"></div>
<div class="c" style="left:0px;top:48px;width:21px;height:24px;border-bottom:none;line-height:25.2px;"></div>
<div class="c" style="left:21px;top:48px;width:85px;height:24px;line-height:25.2px;"><span class="u">SHOP</span></div>
<div class="c s" style="left:106px;top:48px;width:89px;height:24px;line-height:25.2px;">Receivable</div>
<div class="c s" style="left:195px;top:48px;width:86px;height:24px;line-height:25.2px;">SI-9169</div>
<div class="c s" style="left:281px;top:48px;width:85px;height:24px;line-height:25.2px;"><span style="letter-spacing:0.3px">27/11/2025</span></div>
<div class="c s" style="left:366px;top:48px;width:86px;height:24px;line-height:25.2px;">MOSSA KU...</div>
<div class="c r s" style="left:452px;top:48px;width:84px;height:24px;line-height:25.2px;">243.80</div>
<div class="c" style="left:0px;top:72px;width:21px;height:24px;border-bottom:none;line-height:25.2px;"></div>
<div class="c" style="left:21px;top:72px;width:85px;height:24px;line-height:25.2px;"><span class="u">SHOP</span></div>
<div class="c" style="left:106px;top:72px;width:89px;height:24px;line-height:25.2px;">Receivable</div>
<div class="c" style="left:195px;top:72px;width:86px;height:24px;line-height:25.2px;">SI-9171</div>
<div class="c" style="left:281px;top:72px;width:85px;height:24px;line-height:25.2px;"><span style="letter-spacing:0.3px">27/11/2025</span></div>
<div class="c" style="left:366px;top:72px;width:86px;height:24px;line-height:25.2px;">MUSASSA ...</div>
<div class="c r" style="left:452px;top:72px;width:84px;height:24px;line-height:25.2px;">1887.15</div>
<div class="c" style="left:0px;top:96px;width:21px;height:24px;border-bottom:none;line-height:25.2px;"></div>
<div class="c" style="left:21px;top:96px;width:85px;height:24px;line-height:25.2px;"><span class="u">SHOP-2</span></div>
<div class="c" style="left:106px;top:96px;width:89px;height:24px;line-height:25.2px;">Receivable</div>
<div class="c" style="left:195px;top:96px;width:86px;height:24px;line-height:25.2px;">SI-9167</div>
<div class="c" style="left:281px;top:96px;width:85px;height:24px;line-height:25.2px;"><span style="letter-spacing:0.3px">27/11/2025</span></div>
<div class="c" style="left:366px;top:96px;width:86px;height:24px;line-height:25.2px;">MARYAM S...</div>
<div class="c r" style="left:452px;top:96px;width:84px;height:24px;line-height:25.2px;">1402.32</div>
<div class="c" style="left:0px;top:120px;width:21px;height:24px;border-bottom:none;line-height:22.2px;"></div>
<div class="c" style="left:21px;top:120px;width:85px;height:24px;line-height:22.2px;"><span class="u">SHOP-2</span></div>
<div class="c" style="left:106px;top:120px;width:89px;height:24px;line-height:22.2px;">Receivable</div>
<div class="c" style="left:195px;top:120px;width:86px;height:24px;line-height:22.2px;">SI-9168</div>
<div class="c" style="left:281px;top:120px;width:85px;height:24px;line-height:22.2px;"><span style="letter-spacing:0.3px">27/11/2025</span></div>
<div class="c" style="left:366px;top:120px;width:86px;height:24px;line-height:22.2px;">AL HIJAZIA...</div>
<div class="c r" style="left:452px;top:120px;width:84px;height:24px;line-height:22.2px;">152.38</div>
</div>
<svg style="left:249px;top:812px" width="7" height="10" viewBox="0 0 7 10"><circle cx="3.500" cy="3" r="2.400" fill="#b8b8bc" stroke="#68686c" stroke-width="1"/><circle cx="3" cy="2.400" r="0.900" fill="#e8e8ec"/><path d="M3.500 5.500v4" stroke="#58585c" stroke-width="1.300"/></svg>
<svg style="left:251px;top:838px" width="5" height="9" viewBox="0 0 5 9"><path d="M0 0l5 4.500l-5 4.500z" fill="#505058"/></svg>
<div style="left:751px;top:747px;width:509px;height:165px;border:1px solid #d4d6e4;border-bottom:none;"></div>
<div class="t b" style="left:756px;top:752.8px;">Pending JobCard</div>
<div class="btn" style="left:1169px;top:750px;width:85px;height:26px;">Refresh</div>
<div style="left:755px;top:781px;width:504px;height:131px;background:#fff;border:1px solid #d4d6e4;overflow:hidden;border-bottom:none;">
<div class="c" style="left:0px;top:0px;width:21px;height:23px;line-height:23.4px;"></div>
<div class="c" style="left:21px;top:0px;width:85px;height:23px;line-height:23.4px;">Voucher</div>
<div class="c" style="left:106px;top:0px;width:86px;height:23px;line-height:23.4px;">Branch</div>
<div class="c" style="left:192px;top:0px;width:85px;height:23px;line-height:23.4px;">Account</div>
<div class="c" style="left:277px;top:0px;width:87px;height:23px;line-height:23.4px;">RFQPRQ</div>
<div style="left:364px;top:0px;width:139px;height:23px;border-bottom:1px solid #d4d6e4;"></div>
<div class="c" style="left:0px;top:23px;width:21px;height:26px;border-bottom:2px solid #ccd0e0;"></div>
<div class="c" style="left:21px;top:23px;width:85px;height:26px;border-bottom:2px solid #ccd0e0;"></div>
<div class="c" style="left:106px;top:23px;width:86px;height:26px;border-bottom:2px solid #ccd0e0;"></div>
<div class="c" style="left:192px;top:23px;width:85px;height:26px;border-bottom:2px solid #ccd0e0;"></div>
<div class="c" style="left:277px;top:23px;width:87px;height:26px;border-bottom:2px solid #ccd0e0;"></div>
<div class="c" style="left:0px;top:48px;width:21px;height:24px;border-bottom:none;line-height:25.2px;"></div>
<div class="c" style="left:21px;top:48px;width:85px;height:24px;line-height:25.2px;">WQ-1070</div>
<div class="c s" style="left:106px;top:48px;width:86px;height:24px;line-height:25.2px;">Workshop</div>
<div class="c s" style="left:192px;top:48px;width:85px;height:24px;line-height:25.2px;">ROOTS IN...</div>
<div class="c s" style="left:277px;top:48px;width:87px;height:24px;line-height:25.2px;">As Per Emai...</div>
<div class="c" style="left:0px;top:72px;width:21px;height:24px;border-bottom:none;line-height:25.2px;"></div>
<div class="c" style="left:21px;top:72px;width:85px;height:24px;line-height:25.2px;">WQ-1071</div>
<div class="c" style="left:106px;top:72px;width:86px;height:24px;line-height:25.2px;">Workshop</div>
<div class="c" style="left:192px;top:72px;width:85px;height:24px;line-height:25.2px;">ROOTS IN...</div>
<div class="c" style="left:277px;top:72px;width:87px;height:24px;line-height:25.2px;"></div>
<div class="c" style="left:0px;top:96px;width:21px;height:24px;border-bottom:none;line-height:25.2px;"></div>
<div class="c" style="left:21px;top:96px;width:85px;height:24px;line-height:25.2px;">WQ-1072</div>
<div class="c" style="left:106px;top:96px;width:86px;height:24px;line-height:25.2px;">Workshop</div>
<div class="c" style="left:192px;top:96px;width:85px;height:24px;line-height:25.2px;"><span class="u" style="transform:scaleX(1.18)">مؤسسة ا...</span></div>
<div class="c" style="left:277px;top:96px;width:87px;height:24px;line-height:25.2px;"></div>
<div class="c" style="left:0px;top:120px;width:21px;height:24px;border-bottom:none;line-height:22.2px;"></div>
<div class="c" style="left:21px;top:120px;width:85px;height:24px;line-height:22.2px;">WQ-1073</div>
<div class="c" style="left:106px;top:120px;width:86px;height:24px;line-height:22.2px;">Workshop</div>
<div class="c" style="left:192px;top:120px;width:85px;height:24px;line-height:22.2px;">FIRST MIL...</div>
<div class="c" style="left:277px;top:120px;width:87px;height:24px;line-height:22.2px;">GATE PASS</div>
</div>
<svg style="left:762px;top:812px" width="7" height="10" viewBox="0 0 7 10"><circle cx="3.500" cy="3" r="2.400" fill="#b8b8bc" stroke="#68686c" stroke-width="1"/><circle cx="3" cy="2.400" r="0.900" fill="#e8e8ec"/><path d="M3.500 5.500v4" stroke="#58585c" stroke-width="1.300"/></svg>
<svg style="left:764px;top:838px" width="5" height="9" viewBox="0 0 5 9"><path d="M0 0l5 4.500l-5 4.500z" fill="#505058"/></svg>
<div style="left:1240px;top:805px;width:18px;height:107px;background:#e7e7e8;"></div>
<div style="left:1244px;top:823px;width:10px;height:29px;background:#b4b4bb;"></div>
<svg style="left:1244px;top:810px" width="10" height="6" viewBox="0 0 10 6"><path d="M0 6l5 -6l5 6z" fill="#acacb0"/></svg>
<div style="left:1725px;top:95px;width:20px;height:815px;background:#e7e7e8;"></div>
<div style="left:1730px;top:114px;width:10px;height:391px;background:#b4b4bb;"></div>
<svg style="left:1730px;top:100px" width="10" height="6" viewBox="0 0 10 6"><path d="M0 6l5 -6l5 6z" fill="#acacb0"/></svg>
<svg style="left:1730px;top:898px" width="10" height="6" viewBox="0 0 10 6"><path d="M0 0l5 6l5 -6z" fill="#a0a0a8"/></svg>
<svg style="left:1718px;top:565px" width="30" height="78" viewBox="0 0 30 78"><defs><linearGradient id="chev" x1="0" y1="0" x2="0" y2="1"><stop offset="0" stop-color="#58acd8"/><stop offset="1" stop-color="#2378ae"/></linearGradient></defs><path d="M1.500 1.500h28v74.500l-28 -27z" fill="#f7f7f7"/><path d="M29.500 1.500h-28v47.500" fill="none" stroke="#a4a4a8" stroke-width="1"/><path d="M10 23.500l8.300 -8.300h4.500l-6.300 8.300l6.300 8.300h-4.500z" fill="url(#chev)"/><path d="M8.500 32.800h16" stroke="#b8b8bc" stroke-width="0.900"/></svg>
<div style="left:0px;top:910px;width:1748px;height:29px;background:#0079cf;border-top:2px solid #8a8a8c;"></div>
<div style="left:0px;top:912px;width:1748px;height:1px;background:#e4ecf2;"></div>
<div class="t" style="left:8.01px;top:919.4px;color:#fff;white-space:pre;letter-spacing:-0.33px;">Company Name: HPS</div>
<div class="t" style="left:146px;top:919.4px;color:#fff;white-space:pre;">Logged User: Supervisor</div>
<div class="t" style="left:305px;top:919.4px;color:#fff;white-space:pre;">Logged Date and Time: 27 November 2025  03:41:43 PM</div>
<div class="t" style="left:639px;top:919.4px;color:#fff;white-space:pre;">Last Login Date and Time: 4/2/2023 10:06:57 PM</div>
<div class="t" style="left:931px;top:919.4px;color:#fff;white-space:pre;">(M)</div>
<div style="left:134px;top:916px;width:1px;height:21px;background:#ffffff;opacity:.85;"></div>
<div style="left:293px;top:916px;width:1px;height:21px;background:#ffffff;opacity:.85;"></div>
<div style="left:627px;top:916px;width:1px;height:21px;background:#ffffff;opacity:.85;"></div>
<div style="left:919px;top:916px;width:1px;height:21px;background:#ffffff;opacity:.85;"></div>
<div style="left:961px;top:916px;width:1px;height:21px;background:#ffffff;opacity:.85;"></div>
<div style="left:185px;top:61px;width:214px;height:388px;background:#f8f8f8;border:1px solid #d0d0d6;border-top-color:#d4d4de;box-shadow:1px 1px 1px rgba(0,0,0,.05);"></div>
<div style="left:187px;top:146px;width:210px;height:27px;background:#cfe0f7;"></div>
<div class="m" style="left:224px;top:69.7px;">Ledgers</div>
<svg style="left:379px;top:72.1px" width="5.300" height="9" viewBox="0 0 5.300 9"><path d="M0 0l5.300 4.500l-5.300 4.500z" fill="#1c1c1c"/></svg>
<div class="m" style="left:224px;top:97.0px;">Finance</div>
<svg style="left:379px;top:99.4px" width="5.300" height="9" viewBox="0 0 5.300 9"><path d="M0 0l5.300 4.500l-5.300 4.500z" fill="#1c1c1c"/></svg>
<div class="m" style="left:224px;top:124.4px;letter-spacing:0.11px;">Zakat Report</div>
<svg style="left:379px;top:126.8px" width="5.300" height="9" viewBox="0 0 5.300 9"><path d="M0 0l5.300 4.500l-5.300 4.500z" fill="#1c1c1c"/></svg>
<div class="m" style="left:224px;top:151.8px;">Customer</div>
<svg style="left:379px;top:154.2px" width="5.300" height="9" viewBox="0 0 5.300 9"><path d="M0 0l5.300 4.500l-5.300 4.500z" fill="#1c1c1c"/></svg>
<div class="m" style="left:224px;top:179.1px;">Product List</div>
<div class="m" style="left:224px;top:206.4px;letter-spacing:-0.19px;">Purchases</div>
<svg style="left:379px;top:208.8px" width="5.300" height="9" viewBox="0 0 5.300 9"><path d="M0 0l5.300 4.500l-5.300 4.500z" fill="#1c1c1c"/></svg>
<div class="m" style="left:224px;top:233.8px;letter-spacing:-0.33px;">Sales</div>
<svg style="left:379px;top:236.2px" width="5.300" height="9" viewBox="0 0 5.300 9"><path d="M0 0l5.300 4.500l-5.300 4.500z" fill="#1c1c1c"/></svg>
<div class="m" style="left:224px;top:261.2px;">Workshop</div>
<svg style="left:379px;top:263.6px" width="5.300" height="9" viewBox="0 0 5.300 9"><path d="M0 0l5.300 4.500l-5.300 4.500z" fill="#1c1c1c"/></svg>
<div class="m" style="left:224px;top:288.5px;letter-spacing:0.13px;">Taxes Reports</div>
<svg style="left:379px;top:290.9px" width="5.300" height="9" viewBox="0 0 5.300 9"><path d="M0 0l5.300 4.500l-5.300 4.500z" fill="#1c1c1c"/></svg>
<div class="m" style="left:224px;top:315.8px;letter-spacing:-0.16px;">Day Book</div>
<svg style="left:379px;top:318.2px" width="5.300" height="9" viewBox="0 0 5.300 9"><path d="M0 0l5.300 4.500l-5.300 4.500z" fill="#1c1c1c"/></svg>
<div class="m" style="left:224px;top:343.2px;">Journals</div>
<svg style="left:379px;top:345.6px" width="5.300" height="9" viewBox="0 0 5.300 9"><path d="M0 0l5.300 4.500l-5.300 4.500z" fill="#1c1c1c"/></svg>
<div class="m" style="left:224px;top:370.6px;letter-spacing:-0.12px;">Receivables and Payables</div>
<svg style="left:379px;top:373.0px" width="5.300" height="9" viewBox="0 0 5.300 9"><path d="M0 0l5.300 4.500l-5.300 4.500z" fill="#1c1c1c"/></svg>
<div class="m" style="left:224px;top:397.9px;">Final Reports</div>
<svg style="left:379px;top:400.3px" width="5.300" height="9" viewBox="0 0 5.300 9"><path d="M0 0l5.300 4.500l-5.300 4.500z" fill="#1c1c1c"/></svg>
<div class="m" style="left:224px;top:425.2px;">Voucher Statistics Report</div>
<div style="left:399px;top:146px;width:336px;height:87px;background:#f8f8f8;border:1px solid #d0d0d6;box-shadow:1px 1px 1px rgba(0,0,0,.05);"></div>
<div class="m" style="left:438px;top:154.7px;letter-spacing:-0.06px;">Customer List</div>
<div class="m" style="left:438px;top:182.0px;letter-spacing:-0.06px;">Pending Customer Balances [Bill Wise] Report</div>
<div class="m" style="left:438px;top:209.4px;letter-spacing:-0.06px;">Pending Customer Balances [Party-wise] Report</div>
</body></html>
